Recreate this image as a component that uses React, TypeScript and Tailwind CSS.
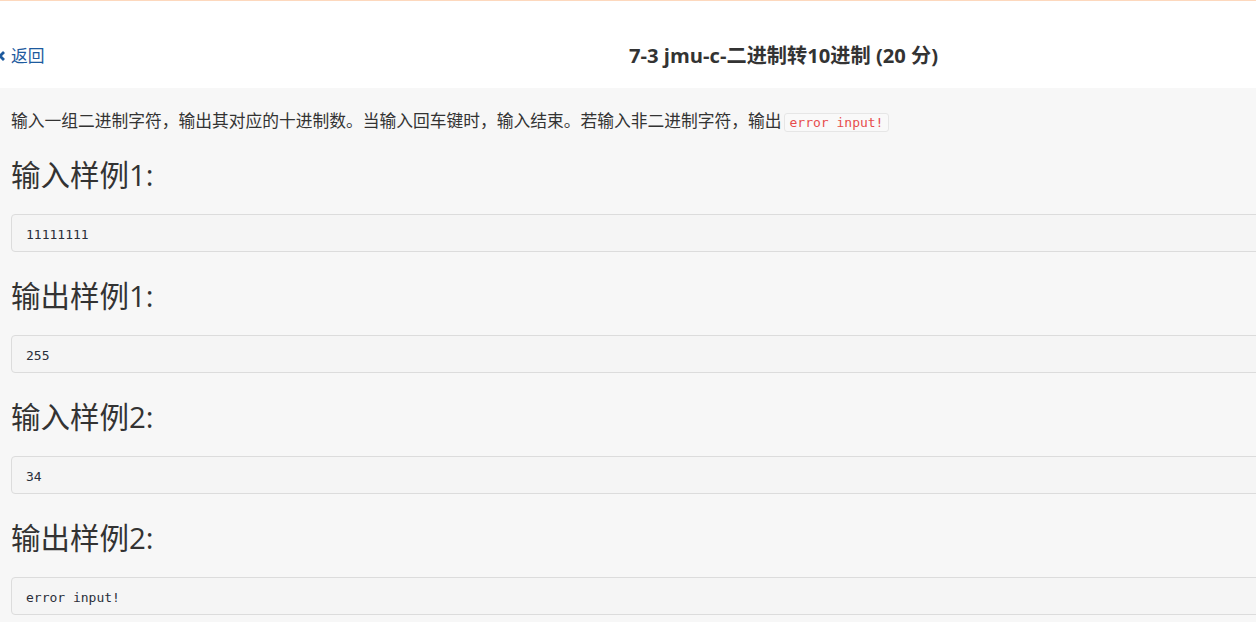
const samples = [
  { title: '输入样例1:', body: '11111111' },
  { title: '输出样例1:', body: '255' },
  { title: '输入样例2:', body: '34' },
  { title: '输出样例2:', body: 'error input!' },
]

const sans = "font-['Open_Sans','Noto_Sans_CJK_SC',sans-serif]"
const mono = "font-['DejaVu_Sans_Mono','Noto_Sans_CJK_SC',monospace]"

export default function App() {
  return (
    <div className={`h-[622px] w-[1256px] overflow-hidden bg-[#f7f7f7] text-[#333] ${sans}`}>
      <div className="h-px bg-[#fdd8bd]" />

      {/* header */}
      <div className="relative flex h-[87px] items-center bg-white pt-[22px]">
        <a className="ml-[-3px] flex items-center gap-[5px] text-[16.8px] text-[#1d5a9e]">
          <svg width="9" height="12" viewBox="0 0 9 12" fill="none" stroke="currentColor" strokeWidth="2.8" aria-hidden>
            <path d="M7 2 3 6l4 4" />
          </svg>
          <span>返回</span>
        </a>
        <h1 className="absolute left-[629px] text-[20.2px] font-bold text-[#333]">
          7-3 jmu-c-二进制转10进制 (20 分)
        </h1>
      </div>

      {/* problem body */}
      <div className="pl-[11px] pt-[21px]">
        <p className="text-[16.75px] leading-[24px]">
          输入一组二进制字符，输出其对应的十进制数。当输入回车键时，输入结束。若输入非二进制字符，输出
          <code className={`ml-[2px] rounded-[3px] border border-[#e6e6e6] bg-[#f9f9f9] px-[5px] py-px text-[13px] text-[#e74c4c] ${mono}`}>
            error input!
          </code>
        </p>

        {samples.map((s, i) => (
          <div key={s.title} className={i === 0 ? 'mt-[23px]' : 'mt-[27px]'}>
            <h3 className="text-[29.5px] font-normal leading-[34px] text-[#333]">{s.title}</h3>
            <pre className={`mt-[22px] flex h-[38px] w-[1300px] items-center rounded-[4px] border border-[#dcdcdc] bg-[#f5f5f5] px-[14px] pt-[3px] text-[13px] text-[#2b2f3a] ${mono}`}>
              {s.body}
            </pre>
          </div>
        ))}
      </div>
    </div>
  )
}
